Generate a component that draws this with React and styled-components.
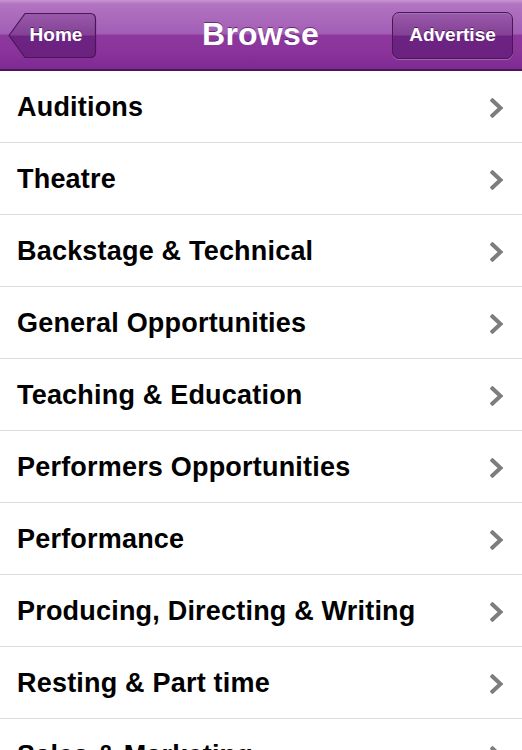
import React from "react";
import styled, { createGlobalStyle } from "styled-components";

const Global = createGlobalStyle`
  html, body { margin: 0; padding: 0; background: #fff; }
  body { font-family: "Liberation Sans", Arial, sans-serif; overflow: hidden; }
`;

const Screen = styled.div`
  width: 522px;
  height: 750px;
  overflow: hidden;
  background: #fff;
`;

const NavBar = styled.header`
  height: 69px;
  border-bottom: 2px solid #4b1658;
  background: linear-gradient(
    to bottom,
    #c896d2 0px,
    #b274c2 4px,
    #a35db5 34px,
    #8d389f 35px,
    #8a349c 50px,
    #7f2a92 69px
  );
  display: grid;
  grid-template-columns: 1fr auto 1fr;
  align-items: center;
  padding: 0 9px 0 8px;
`;

const Title = styled.h1`
  margin: 0;
  color: #fff;
  font-size: 32px;
  font-weight: bold;
  text-shadow: 0 -1px 0 rgba(60, 10, 70, 0.6);
  letter-spacing: 0.2px;
`;

const BackButton = styled.button`
  position: relative;
  justify-self: start;
  width: 89px;
  height: 47px;
  border: none;
  background: none;
  padding: 0 0 0 7px;
  color: #fff;
  font-family: inherit;
  font-size: 19px;
  font-weight: bold;
  text-shadow: 0 -1px 0 rgba(40, 0, 50, 0.6);
  margin-top: 1px;
  svg { position: absolute; inset: 0; }
  span { position: relative; }
`;

const PlainButton = styled.button`
  justify-self: end;
  width: 121px;
  height: 47px;
  margin-top: 1px;
  border-radius: 7px;
  border: 1px solid #4a1656;
  background: linear-gradient(to bottom, #9a5aaa 0%, #844196 48%, #6c2382 52%, #6a2180 100%);
  box-shadow: 0 1px 0 rgba(255, 255, 255, 0.25), inset 0 1px 0 rgba(255, 255, 255, 0.15);
  color: #fff;
  font-family: inherit;
  font-size: 19px;
  font-weight: bold;
  text-shadow: 0 -1px 0 rgba(40, 0, 50, 0.6);
  padding: 0;
`;

const List = styled.ul`
  list-style: none;
  margin: 0;
  padding: 0;
`;

const Row = styled.li`
  height: 71px;
  box-sizing: border-box;
  height: 72px;
  border-bottom: 1px solid #dcdcdc;
  display: flex;
  align-items: center;
  justify-content: space-between;
  padding: 2px 18px 0 17px;
  font-size: 27px;
  letter-spacing: 0.2px;
  font-weight: bold;
  color: #000;
  white-space: nowrap;
`;

const Chevron = () => (
  <svg width="14" height="20" viewBox="0 0 14 20">
    <polyline points="2.5,2.5 10.5,10 2.5,17.5" fill="none" stroke="#7d7d7d" strokeWidth="4" strokeLinecap="square" />
  </svg>
);

const BackShape = () => (
  <svg width="89" height="47" viewBox="0 0 89 47">
    <defs>
      <linearGradient id="bb" x1="0" y1="0" x2="0" y2="1">
        <stop offset="0" stopColor="#9a5aaa" />
        <stop offset="0.48" stopColor="#844196" />
        <stop offset="0.52" stopColor="#6c2382" />
        <stop offset="1" stopColor="#6a2180" />
      </linearGradient>
    </defs>
    <path
      d="M1,23.5 L17,1.5 L82,1.5 Q87.5,1.5 87.5,7 L87.5,40 Q87.5,45.5 82,45.5 L17,45.5 Z"
      fill="url(#bb)"
      stroke="#4a1656"
      strokeWidth="1.2"
      strokeLinejoin="round"
    />
  </svg>
);

const items = [
  "Auditions",
  "Theatre",
  "Backstage & Technical",
  "General Opportunities",
  "Teaching & Education",
  "Performers Opportunities",
  "Performance",
  "Producing, Directing & Writing",
  "Resting & Part time",
  "Sales & Marketing",
];

export default function App() {
  return (
    <Screen>
      <Global />
      <NavBar>
        <BackButton>
          <BackShape />
          <span>Home</span>
        </BackButton>
        <Title>Browse</Title>
        <PlainButton>Advertise</PlainButton>
      </NavBar>
      <List>
        {items.map((t) => (
          <Row key={t}>
            <span>{t}</span>
            <Chevron />
          </Row>
        ))}
      </List>
    </Screen>
  );
}
